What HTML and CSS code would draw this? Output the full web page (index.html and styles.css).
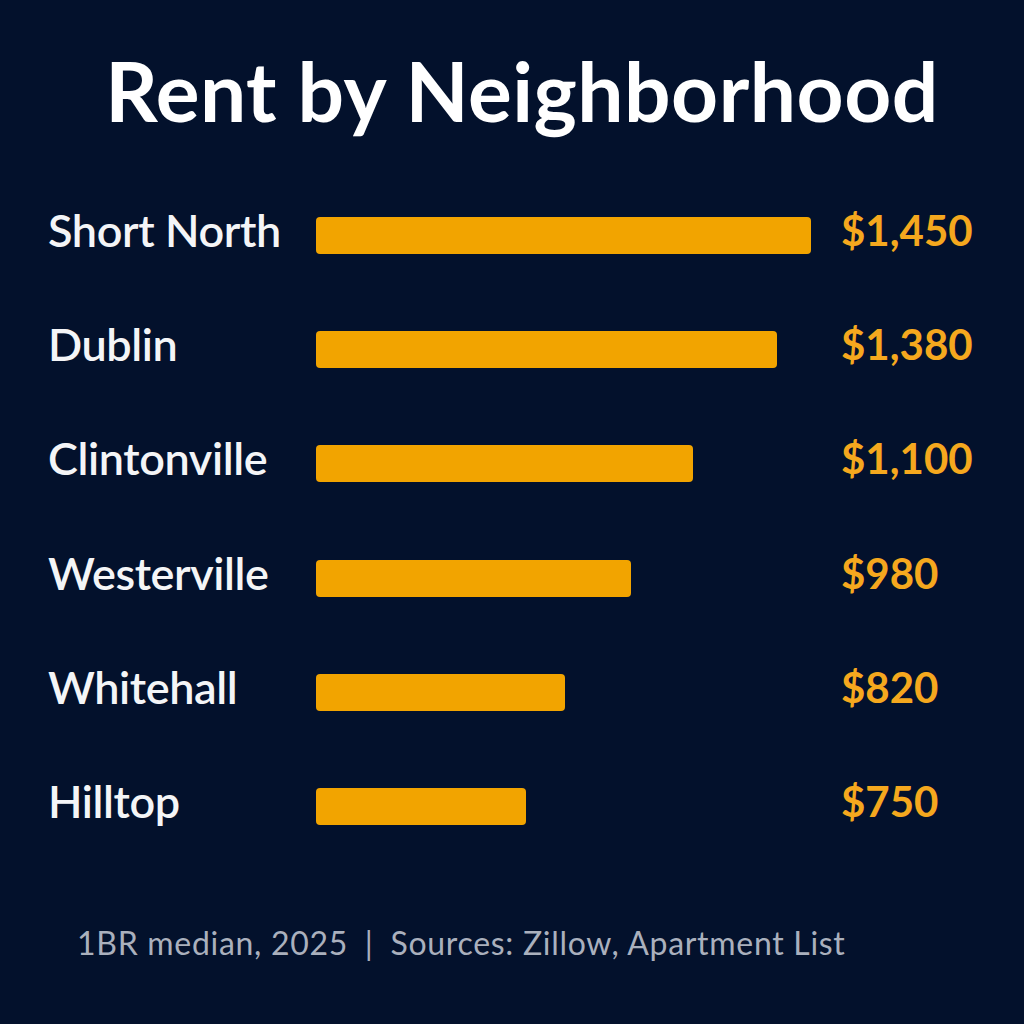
FILE: index.html
```html
<!DOCTYPE html>
<html lang="en">
<head>
<meta charset="utf-8">
<title>Rent by Neighborhood</title>
<link rel="stylesheet" href="styles.css">
</head>
<body>
<main class="chart">
  <h1 class="title">Rent by Neighborhood</h1>
  <ul class="rows">
    <li class="row"><span class="label">Short North</span><span class="track"><span class="bar" style="width:495px"></span></span><span class="value">$1,450</span></li>
    <li class="row"><span class="label">Dublin</span><span class="track"><span class="bar" style="width:461px"></span></span><span class="value">$1,380</span></li>
    <li class="row"><span class="label">Clintonville</span><span class="track"><span class="bar" style="width:377px"></span></span><span class="value">$1,100</span></li>
    <li class="row"><span class="label">Westerville</span><span class="track"><span class="bar" style="width:315px"></span></span><span class="value">$980</span></li>
    <li class="row"><span class="label">Whitehall</span><span class="track"><span class="bar" style="width:249px"></span></span><span class="value">$820</span></li>
    <li class="row"><span class="label">Hilltop</span><span class="track"><span class="bar" style="width:210px"></span></span><span class="value">$750</span></li>
  </ul>
  <p class="footer">1BR median, 2025 <span class="sep">|</span> Sources: Zillow, Apartment List</p>
</main>
</body>
</html>
```

FILE: styles.css
```css
html, body {
  margin: 0;
  padding: 0;
  background: #03112c;
}

body {
  width: 1024px;
  height: 1024px;
  overflow: hidden;
  font-family: "Lato", "Liberation Sans", sans-serif;
}

.chart {
  padding: 0 48px;
}

.title {
  margin: 42px 0 0;
  font-size: 82px;
  line-height: 97px;
  font-weight: 700;
  color: #ffffff;
  text-align: center;
  letter-spacing: 0.5px;
  padding-left: 20px;
}

.rows {
  list-style: none;
  margin: 68px 0 0;
  padding: 0;
  display: flex;
  flex-direction: column;
  gap: 68.2px;
}

.row {
  display: grid;
  grid-template-columns: 268px 495px 1fr;
  align-items: start;
  height: 46px;
}

.label {
  font-size: 45px;
  line-height: 46px;
  font-weight: 600;
  letter-spacing: -0.4px;
  color: #f4f5f7;
  white-space: nowrap;
}

.track {
  display: block;
  margin-top: 10px;
}

.bar {
  display: block;
  height: 37px;
  background: #f2a400;
  border-radius: 4px;
}

.value {
  padding-left: 30px;
  font-size: 42px;
  line-height: 46px;
  font-weight: 700;
  color: #f5a81e;
  white-space: nowrap;
}

.footer {
  margin: 101px 0 0;
  padding-left: 29px;
  font-size: 32px;
  line-height: 36px;
  letter-spacing: 0.7px;
  color: #aab0bd;
  white-space: nowrap;
}

.sep {
  margin: 0 8px;
}
```
